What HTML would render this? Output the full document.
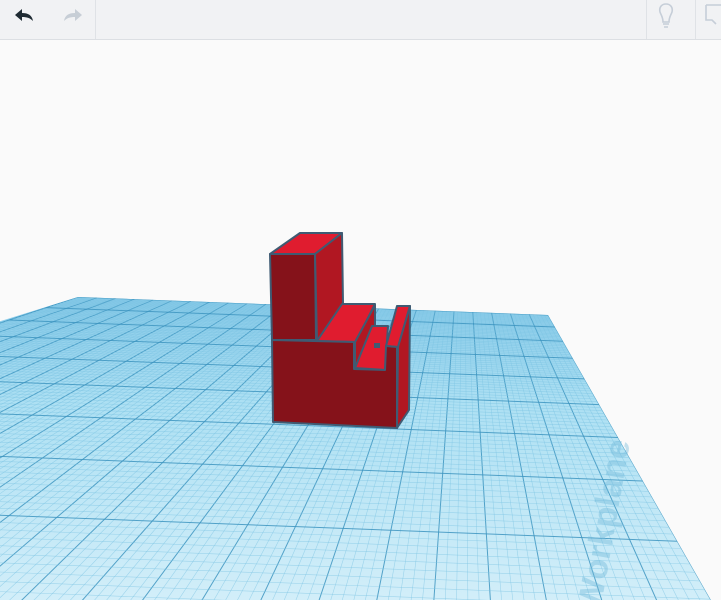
<!DOCTYPE html>
<html><head><meta charset="utf-8"><style>
html,body{margin:0;padding:0;width:721px;height:600px;overflow:hidden;background:#fafafa;font-family:"Liberation Sans",sans-serif}
#tb{position:absolute;left:0;top:0;width:721px;height:39px;background:#f1f2f4;border-bottom:1px solid #dcdfe3;overflow:hidden}
.d{position:absolute;top:0;width:1px;height:39px;background:#dfe2e6}
svg{position:absolute;left:0;top:0}
</style></head><body>
<svg id="s" width="721" height="600" viewBox="0 0 721 600">
<defs>
<linearGradient id="g" x1="0" y1="297" x2="0" y2="600" gradientUnits="userSpaceOnUse">
<stop offset="0" stop-color="#86c9e8"/><stop offset="0.35" stop-color="#ade0f3"/><stop offset="1" stop-color="#d2eef9"/></linearGradient>
<clipPath id="c"><polygon points="78,297 548,315 800,756 -1400,756"/></clipPath>
<clipPath id="v"><rect x="0" y="0" width="721" height="600"/></clipPath>
</defs>
<g clip-path="url(#v)">
<polygon points="78,297 548,315 800,756 -1400,756" fill="url(#g)"/>
<g id="grid" clip-path="url(#c)"></g>
<text x="0" y="0" transform="translate(600,612) rotate(-80)" font-size="34" font-weight="bold" fill="#6fb8d9" opacity="0.4">Workplane</text>
</g>
<g stroke="#3f5b73" stroke-width="2" stroke-linejoin="round">
<polygon points="270,254 315,254 316,340 272,340" fill="#85121a"/>
<polygon points="270,254 300,233 342,233 315,254" fill="#e01c2f"/>
<polygon points="315,254 342,233 343,304 317,341" fill="#b11722"/>
<polygon points="317,341 342,304 375,304 356,342" fill="#e01c2f"/>
<polygon points="355,342 375,305 375,327 355,368" fill="#b11722"/>
<polygon points="355,368 372,326 388,326 385,370" fill="#e01c2f"/>
<polygon points="386,346 397,306 410,306 398,347" fill="#e01c2f"/>
<polygon points="398,347 410,306 409,410 397,428" fill="#b11722"/>
<polygon points="272,340 354,342 354,369 385,370 386,346 397,347 397,428 273,422" fill="#85121a"/>
<rect x="374" y="343" width="6" height="5" fill="#3f5b73" stroke="none"/>
</g>
</svg>
<div id="tb">
<div class="d" style="left:95px"></div><div class="d" style="left:646px"></div><div class="d" style="left:695px"></div>
<svg width="40" height="39" style="left:5px"><path d="M10 15 L17 9 L17 13 C23 13 27 15 28 21 C25 18 22 17 17 17 L17 21 Z" fill="#1f2b33"/></svg>
<svg width="40" height="39" style="left:52px"><path d="M30 15 L23 9 L23 13 C17 13 13 15 12 21 C15 18 18 17 23 17 L23 21 Z" fill="#c7ced6"/></svg>
<svg width="30" height="39" style="left:656px"><path d="M10 4 C5 4 3 8 4 12 C5 15 7 17 7 22 L13 22 C13 17 15 15 16 12 C17 8 15 4 10 4 Z M7 24 H13 M8 27 H12" fill="none" stroke="#c6ced8" stroke-width="1.6"/></svg>
<svg width="26" height="39" style="left:704px"><path d="M2 5 H20 M2 5 V20 H8 L12 24" fill="none" stroke="#c6ced8" stroke-width="1.6"/></svg>
</div>
<script>
(function(){
var g=document.getElementById('grid');
var VX=464,VY=168,D=13.2;
function P(u,s){var x=78+470*u,y=297+18*u;return [VX+(x-VX)*s,VY+(y-VY)*s];}
var h='';
function ln(a,b,c,w,o){h+='<line x1="'+a[0].toFixed(1)+'" y1="'+a[1].toFixed(1)+'" x2="'+b[0].toFixed(1)+'" y2="'+b[1].toFixed(1)+'" stroke="'+c+'" stroke-width="'+w+'" opacity="'+o+'"/>';}
var N=25,M=10;
for(var i=0;i<=N*M;i++){var u=i/(N*M);var maj=i%M==0;
 if(!maj && i%2) continue;
 ln(P(u,1),P(u,5),maj?'#3d95c0':'#7cc4e3',maj?1:0.6,maj?0.85:0.6);}
for(var j=0;j<=100;j++){var z=j/10;var s=D/(D-z);var maj=j%M==0;
 ln(P(0,s),P(1,s),maj?'#3d95c0':'#7cc4e3',maj?1:0.6,maj?0.85:0.6);}
g.innerHTML=h;
})();
</script>
</body></html>
